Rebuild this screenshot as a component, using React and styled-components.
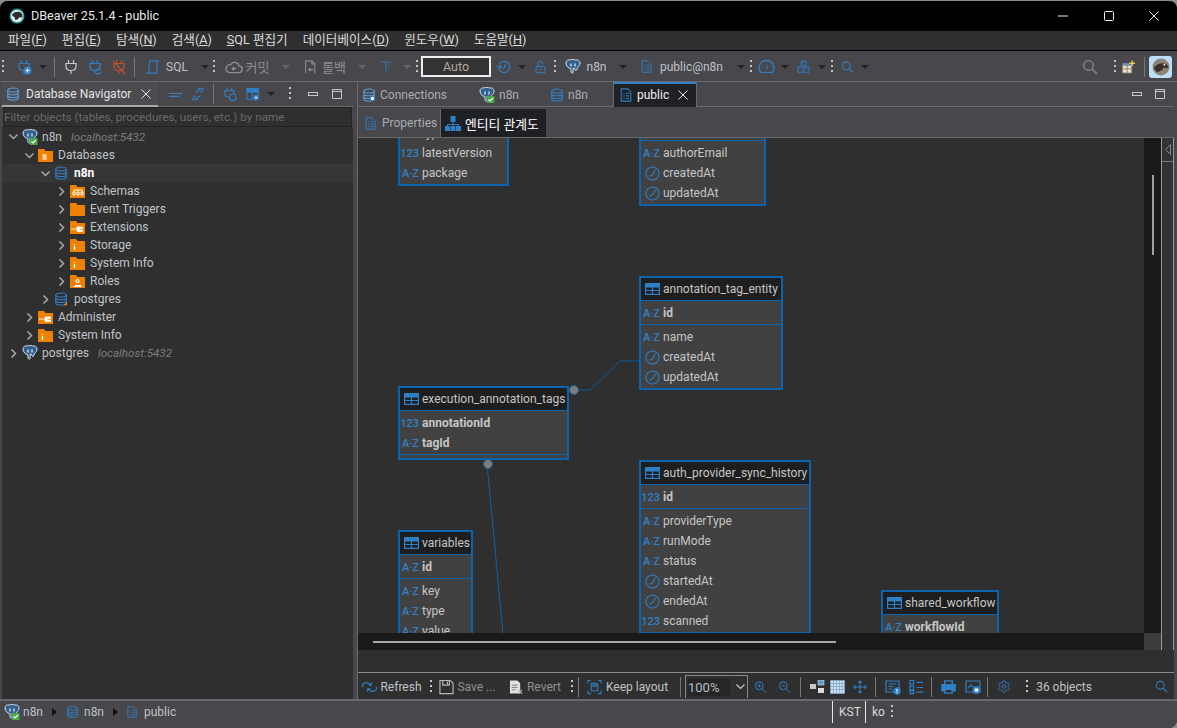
import React from 'react';
import styled, { createGlobalStyle } from 'styled-components';
import { Settings } from 'lucide-react';

const Global = createGlobalStyle`
  html, body { margin: 0; padding: 0; background: #8c8c8c; }
  body { font-family: Roboto, "Noto Sans CJK KR", sans-serif; font-size: 12px; }
  * { box-sizing: border-box; }
`;

const BLUE = '#2f80c8';
const FG = '#bfc3c7';

const Window = styled.div`
  width: 1177px;
  height: 728px;
  display: flex;
  flex-direction: column;
  overflow: hidden;
  background: #47474c;
  border-radius: 8px 8px 8px 0;
  border-top: 1px solid #8c8c8c;
`;
const TitleBar = styled.div`
  height: 30px;
  flex: none;
  background: #000;
  color: #e8e8e8;
  display: flex;
  align-items: center;
  padding: 0 0 1px 9px;
  gap: 6px;
  font-size: 12.6px;
`;
const WinButtons = styled.div`
  margin-left: auto;
  display: flex;
  height: 100%;
`;
const WinButton = styled.div`
  width: 45.5px;
  display: flex;
  align-items: center;
  justify-content: center;
`;
const MenuBar = styled.div`
  height: 20px;
  flex: none;
  background: #2f2f2f;
  border-bottom: 1px solid #000;
  display: flex;
  align-items: center;
  padding: 0 0 2px 8px;
  gap: 15px;
  color: #dcdcdc;
  font-size: 12.6px;
  line-height: 16px;
  u { text-underline-offset: 1px; }
`;
const Toolbar = styled.div`
  height: 31px;
  flex: none;
  display: flex;
  align-items: center;
  background: #47474c;
  border-bottom: 1px solid #69696d;
  padding: 1px 5px 0 0;
`;
const Tool = styled.div`
  flex: none;
  width: ${p => p.$w}px;
  margin-left: ${p => (p.$ml === 'auto' ? 'auto' : `${p.$ml || 0}px`)};
  display: flex;
  align-items: center;
  justify-content: center;
  white-space: nowrap;
  font-size: ${p => p.$fs || 12}px;
  color: ${p => (p.$dim ? '#8f8f8f' : FG)};
`;
const Caret = styled.div`
  flex: none;
  margin-left: ${p => p.$ml || 0}px;
  width: 0;
  height: 0;
  border-left: 4px solid transparent;
  border-right: 4px solid transparent;
  border-top: 4px solid ${p => (p.$dim ? '#66666a' : '#232325')};
`;
const Grip = styled.div`
  flex: none;
  margin-left: ${p => p.$ml || 0}px;
  width: 2px;
  height: 14px;
  background: repeating-linear-gradient(to bottom, #c4c4c4 0 2px, transparent 2px 5px);
`;
const Sep = styled.div`
  flex: none;
  margin-left: ${p => p.$ml || 0}px;
  width: 1px;
  height: 20px;
  background: #77777a;
`;
const AutoBox = styled.div`
  flex: none;
  margin-left: 3px;
  width: 70px;
  height: 21px;
  border: 2px solid #eee;
  background: #333;
  color: #b0a898;
  display: flex;
  align-items: center;
  justify-content: center;
  font-size: 12.5px;
`;
const PerspectiveButton = styled.div`
  flex: none;
  margin-left: 4px;
  width: 23px;
  height: 22px;
  border-radius: 3px;
  background: #bcdff7;
  display: flex;
  align-items: center;
  justify-content: center;
`;
const Main = styled.div`
  flex: 1;
  min-height: 0;
  display: flex;
  background: #47474c;
`;
const LeftPanel = styled.div`
  width: 352px;
  margin-left: 1px;
  flex: none;
  display: flex;
  flex-direction: column;
`;
const RightPanel = styled.div`
  width: 817px;
  flex: none;
  margin-left: 4px;
  display: flex;
  flex-direction: column;
  border-left: 1px solid #69696d;
`;
const TabStrip = styled.div`
  height: 25px;
  flex: none;
  display: flex;
  align-items: center;
  background: #47474c;
  border-bottom: 1px solid #69696d;
  padding-right: ${p => p.$pr || 0}px;
`;
const NavTab = styled.div`
  width: 156px;
  height: 25px;
  flex: none;
  margin-left: 1px;
  display: flex;
  align-items: center;
  gap: 6px;
  padding: 2px 0 0 4px;
  color: #e4e4e4;
  background: #4b4b50;
  border-bottom: 2px solid #a8a8a8;
`;
const CloseMark = styled.span`
  margin-left: auto;
  margin-right: ${p => p.$mr || 7}px;
  display: flex;
`;
const FilterInput = styled.div`
  height: 20px;
  flex: none;
  margin: 0 1px 0 2px;
  background: #2f2f2f;
  border: 1px solid #232323;
  color: #6a6a6a;
  display: flex;
  align-items: center;
  padding: 0 0 1px 0;
  font-size: 11.75px;
  white-space: nowrap;
`;
const Tree = styled.div`
  flex: 1;
  background: #2f2f2f;
  margin-left: 1px;
`;
const TreeRow = styled.div`
  height: ${p => (p.$first ? 19 : 18)}px;
  display: flex;
  align-items: center;
  padding-left: ${p => p.$lvl * 16 + 7}px;
  background: ${p => (p.$sel ? '#363636' : 'transparent')};
  color: ${p => (p.$sel ? '#fff' : FG)};
  font-weight: ${p => (p.$sel ? 700 : 400)};
  white-space: nowrap;
`;
const Chevron = styled.span`
  width: 9px;
  flex: none;
  display: flex;
  margin-right: 4px;
`;
const RowIcon = styled.span`
  width: 17px;
  flex: none;
  display: flex;
  margin-right: 3px;
`;
const Host = styled.span`
  margin-left: 9px;
  font-style: italic;
  font-size: 11.6px;
  color: #7d7d7d;
`;
const EditorTab = styled.div`
  flex: none;
  height: 25px;
  width: ${p => p.$w}px;
  margin-left: ${p => p.$ml || 0}px;
  display: flex;
  align-items: center;
  gap: 4px;
  padding: ${p => (p.$active ? 0 : 1)}px 0 0 ${p => p.$pl || 0}px;
  color: ${p => (p.$active ? '#f0f0f0' : '#a9adb1')};
  background: ${p => (p.$active ? '#1f2024' : 'transparent')};
  border-top: ${p => (p.$active ? `2px solid ${BLUE}` : 'none')};
  border-right: ${p => (p.$active ? '1px solid #69696d' : 'none')};
  border-left: ${p => (p.$active ? '1px solid #69696d' : 'none')};
`;
const StripIcons = styled.div`
  margin-left: auto;
  display: flex;
  align-items: center;
  gap: 13px;
`;
const SubTabs = styled.div`
  height: 30px;
  flex: none;
  margin-top: 1px;
  display: flex;
  align-items: flex-end;
  background: #47474c;
  border-bottom: 1px solid #69696d;
`;
const SubTab = styled.div`
  flex: none;
  width: ${p => p.$w}px;
  height: 28px;
  display: flex;
  align-items: center;
  gap: ${p => (p.$active ? 4 : 5)}px;
  padding-left: ${p => p.$pl}px;
  font-size: ${p => (p.$active ? 12.8 : 12)}px;
  color: ${p => (p.$active ? '#fff' : '#a9adb1')};
  background: ${p => (p.$active ? '#1f2024' : 'transparent')};
  border-right: ${p => (p.$active ? 'none' : '1px solid #69696d')};
`;
const DiagramArea = styled.div`
  height: 512px;
  flex: none;
  display: flex;
`;
const CanvasColumn = styled.div`
  width: 786px;
  flex: none;
  display: flex;
  flex-direction: column;
`;
const Canvas = styled.div`
  position: relative;
  flex: 1;
  overflow: hidden;
  background: #2f2f2f;
`;
const Wires = styled.svg`
  position: absolute;
  inset: 0;
`;
const Node = styled.div`
  position: absolute;
  left: ${p => p.$x}px;
  top: ${p => p.$y}px;
  width: ${p => p.$w}px;
  border: 2px solid #0b64ad;
  background: #414141;
  color: #c6c6c6;
`;
const NodeHead = styled.div`
  height: 23px;
  display: flex;
  align-items: center;
  padding-left: 4px;
  gap: 3px;
  background: #1e1e1e;
  border-bottom: 1px solid #0b64ad;
  white-space: nowrap;
`;
const NodeSection = styled.div`
  padding: 2px 0 1px;
  min-height: 3px;
  border-top: ${p => (p.$line ? '1px solid #0b64ad' : 'none')};
`;
const Attr = styled.div`
  height: 20px;
  display: flex;
  align-items: center;
  font-weight: ${p => (p.$key ? 700 : 400)};
  white-space: nowrap;
`;
const AttrIcon = styled.span`
  width: 22px;
  padding-right: 3px;
  flex: none;
  display: flex;
  justify-content: flex-end;
  color: ${BLUE};
  font-size: 11px;
  font-weight: 500;
`;
const TrackColumn = styled.div`
  width: 17px;
  flex: none;
  display: flex;
  flex-direction: column;
  background: #1a1a1a;
`;
const VTrack = styled.div`
  flex: 1;
  display: flex;
  justify-content: center;
  padding-top: 37px;
`;
const VThumb = styled.div`
  width: 2px;
  height: 80px;
  background: #a0a0a0;
`;
const ScrollCorner = styled.div`
  height: 17px;
  flex: none;
  background: #3c3c3c;
`;
const SideHandle = styled.div`
  width: 13px;
  flex: none;
  background: #333;
  border-left: 1px solid #999;
  border-right: 1px solid #999;
`;
const HandleCap = styled.div`
  height: 24px;
  border-bottom: 1px solid #777;
  display: flex;
  align-items: center;
  justify-content: center;
`;
const HScroll = styled.div`
  height: 17px;
  flex: none;
  background: #1a1a1a;
  display: flex;
  align-items: center;
  padding-left: 15px;
`;
const HThumb = styled.div`
  width: 463px;
  height: 2px;
  background: #a8a8a8;
`;
const BlankBand = styled.div`
  flex: 1;
  background: #2f2f2f;
`;
const DiagramBar = styled.div`
  height: 27px;
  flex: none;
  display: flex;
  align-items: center;
  background: #2f2f2f;
  border-top: 1px solid #8a8a8a;
  padding: 1px 6px 0 0;
`;
const ZoomCombo = styled.div`
  flex: none;
  margin-left: 4px;
  width: 63px;
  height: 23px;
  display: flex;
  align-items: center;
  border: 1px solid #8a8a8a;
  border-bottom: none;
  color: #b6bcc2;
  font-size: 13px;
`;
const ZoomValue = styled.div`
  width: 42px;
  height: 17px;
  margin-left: 2px;
  background: #262626;
  display: flex;
  align-items: center;
`;
const StatusBar = styled.div`
  height: 29px;
  flex: none;
  display: flex;
  align-items: center;
  background: #47474c;
  border-top: 2px solid #69696d;
  padding-bottom: 6px;
  color: ${FG};
`;
const StatusCrumb = styled.span`
  flex: none;
  width: ${p => p.$w}px;
  margin-left: ${p => p.$ml || 0}px;
  display: flex;
`;
const StatusArrow = styled.span`
  flex: none;
  margin-left: ${p => p.$ml}px;
  width: 0;
  height: 0;
  border-top: 4px solid transparent;
  border-bottom: 4px solid transparent;
  border-left: 5px solid #111;
`;
const StatusCell = styled.div`
  flex: none;
  width: ${p => p.$w}px;
  margin-left: ${p => p.$ml || 0}px;
  height: 22px;
  border-left: 1px solid #e4e4e4;
  display: flex;
  align-items: center;
  padding-left: 6px;
  color: #d8d8d8;
`;

const Ic = ({ s = 16, c = BLUE, w = 1.2, vb = 16, children }) => (
  <svg width={s} height={s} viewBox={`0 0 ${vb} ${vb}`} fill="none" stroke={c} strokeWidth={w}>{children}</svg>
);

const Db = ({ c = BLUE, s = 14, badge }) => (
  <Ic s={s} c={c}>
    <ellipse cx="8" cy="3.5" rx="6" ry="2.3" />
    <path d="M2 3.5v9c0 1.3 2.7 2.3 6 2.3s6-1 6-2.3v-9M2 6.6c0 1.3 2.7 2.3 6 2.3s6-1 6-2.3M2 9.6c0 1.3 2.7 2.3 6 2.3s6-1 6-2.3" />
    {badge === 'plug' && <circle cx="12" cy="12" r="2.500" fill="#fff" stroke={BLUE} />}
    {badge === 'arrow' && <path d="M11 15h4v-4z" fill="#f08000" stroke="none" />}
  </Ic>
);
const DocList = ({ s = 14, c = BLUE }) => (
  <Ic s={s} c={c}>
    <path d="M2.5 1h7.5l3.5 3.5V15h-11zM5 6h1.5M8 6h3.5M5 9h1.5M8 9h3.5M5 12h1.5M8 12h3.5" />
  </Ic>
);
const Elephant = ({ s = 16, ok }) => (
  <svg width={s} height={s} viewBox="0 0 16 16">
    <path d="M1 4c0-2.500 2-3.500 4-3 1.500-.8 4-.8 5.500 0 2.500-.5 4.500.7 4.500 3 0 2-1 3.500-2.500 4.200-.3 1.500-.5 3-1.500 3.300-1 .2-1.200-1-1.200-2.300-.8.3-1.300.3-1.800.1l.2 4c.1 1-1.700 1-2 .1-.4-1-.2-2.400-.4-3.900C3.500 9.500 1 7 1 4z" fill="#31618f" stroke="#d5dde5" strokeWidth="1" />
    <path d="M6 4.500v3M10 4.500v3" stroke="#e8eef4" strokeWidth="1.200" />
    {ok && <rect x="8" y="9" width="7.500" height="7" fill="#45a845" />}
    {ok && <path d="M9.500 12.500l1.500 1.500 3-3" stroke="#fff" strokeWidth="1.200" fill="none" />}
  </svg>
);
const Folder = ({ kind }) => (
  <svg width="15" height="14" viewBox="0 0 15 14">
    <path d="M0 1h6l1.500 2H15v11H0z" fill="#f08000" />
    {kind === 'db' && <path d="M4 6h5v6H4zM4 8h5M4 10h5" fill="#fff" stroke="#f08000" strokeWidth=".8" />}
    {kind === 'schema' && <path d="M3 8h2v3H3zM7 8h2v3H7zM11 8h2v3h-2zM4 8V6h8v2" fill="none" stroke="#fff" strokeWidth="1" />}
    {kind === 'wrench' && <path d="M1 9h6M7 7h5.500v1.500H9v1.500h3.500v1.500H7z" fill="#fff" stroke="#fff" strokeWidth=".8" />}
    {kind === 'info' && <path d="M4.500 6v1M4.500 8v4" stroke="#fff" strokeWidth="1.400" />}
    {kind === 'user' && <path d="M5 11.500h6M3.500 12.500h8M7.500 5.500a1.500 1.500 0 1 0 .01 0z" stroke="#fff" strokeWidth="1.100" fill="none" />}
  </svg>
);
const Chev = ({ open }) => (
  <svg width="9" height="9" viewBox="0 0 9 9" fill="none" stroke="#a8a8a8" strokeWidth="1.500">
    {open ? <path d="M.5 2.500l4 4 4-4" /> : <path d="M2.500.5l4 4-4 4" />}
  </svg>
);
const Plug = ({ c = BLUE, children }) => (
  <Ic c={c}>
    <path d="M5.500 1v3.500M10.500 1v3.500M3 4.500h10v3c0 2.500-2 4-5 4s-5-1.500-5-4zM8 11.500V15" />
    {children}
  </Ic>
);
const Beaver = ({ s = 16 }) => (
  <svg width={s} height={s} viewBox="0 0 16 16">
    <circle cx="8" cy="8" r="7.500" fill="#2aa0a5" />
    <circle cx="8" cy="8" r="6" fill="#f2f2f2" />
    <path d="M3 7c1-3 5-4 8-3 2 1 2.500 3 2.500 5-1 1-2 .5-3 0-1 2-2 3-4 3-1-1-.5-2-1-3-1 0-2-1-2.500-2z" fill="#2c2c2c" />
  </svg>
);
const Mole = () => (
  <svg width="18" height="18" viewBox="0 0 16 16">
    <circle cx="8" cy="8" r="7.500" fill="#8f8378" />
    <path d="M1.500 9c2-3 6-5 10-4 2 .5 3 2 3 3.500-2 1-3 .5-4 0-1 2-3 4-6 4-1-1-2-2-3-3.500z" fill="#3a2f2a" />
    <circle cx="11" cy="6" r=".8" fill="#fff" />
  </svg>
);
const Cross = ({ s = 10, c = '#e8e8e8' }) => (
  <svg width={s} height={s} viewBox="0 0 10 10" stroke={c} strokeWidth="1" fill="none">
    <path d="M.5.5l9 9M9.500.5l-9 9" />
  </svg>
);
const MinIcon = () => (
  <svg width="10" height="5" viewBox="0 0 10 5" fill="none" stroke="#c8c8c8"><rect x=".5" y=".5" width="9" height="3" /></svg>
);
const MaxIcon = () => (
  <svg width="10" height="10" viewBox="0 0 10 10" fill="none" stroke="#c8c8c8"><path d="M.5.5h9v9h-9zM.5 2.500h9" /></svg>
);
const TableIcon = () => (
  <svg width="15" height="12" viewBox="0 0 15 12" fill="none" stroke="#2f80c8" strokeWidth="1.200">
    <path d="M.6.6h13.800v10.800H.6z" />
    <path d="M.6 1.500h13.800v2.500H.6z" fill="#2f80c8" />
    <path d="M.6 7.500h13.800M7.500 3v8" />
  </svg>
);
const ClockIcon = () => (
  <Ic s={15} w={1.150}>
    <circle cx="8" cy="8" r="7" />
    <path d="M11 3.800L8.500 9 5 11" />
  </Ic>
);
const Search = ({ c = BLUE, s = 14, w = 1.300 }) => (
  <Ic c={c} s={s} w={w}>
    <circle cx="6.500" cy="6.500" r="4.800" />
    <path d="M10 10l5 5" />
  </Ic>
);

const typeIcons = {
  s: 'A·Z',
  n: '123',
  t: <ClockIcon />,
};
const nodes = [
  { name: 'installed_packages', x: 40, y: -66, w: 111, keys: [['s', 'packageName']], attrs: [['s', 'type'], ['n', 'latestVersion'], ['s', 'package']] },
  { name: 'installed_nodes', x: 281, y: -46, w: 127, keys: [['s', 'name']], attrs: [['s', 'authorEmail'], ['t', 'createdAt'], ['t', 'updatedAt']] },
  { name: 'annotation_tag_entity', x: 281, y: 138, w: 144, keys: [['s', 'id']], attrs: [['s', 'name'], ['t', 'createdAt'], ['t', 'updatedAt']] },
  { name: 'execution_annotation_tags', x: 40, y: 248, w: 171, keys: [['n', 'annotationId'], ['s', 'tagId']], attrs: [] },
  { name: 'variables', x: 40, y: 392, w: 75, keys: [['s', 'id']], attrs: [['s', 'key'], ['s', 'type'], ['s', 'value']] },
  { name: 'auth_provider_sync_history', x: 281, y: 322, w: 172, keys: [['n', 'id']], attrs: [['s', 'providerType'], ['s', 'runMode'], ['s', 'status'], ['t', 'startedAt'], ['t', 'endedAt'], ['n', 'scanned']] },
  { name: 'shared_workflow', x: 523, y: 452, w: 118, keys: [['s', 'workflowId']], attrs: [] },
];
const tree = [
  { lvl: 0, open: true, icon: <Elephant ok />, text: 'n8n', host: 'localhost:5432', first: true },
  { lvl: 1, open: true, icon: <Folder kind="db" />, text: 'Databases' },
  { lvl: 2, open: true, icon: <Db />, text: 'n8n', sel: true },
  { lvl: 3, icon: <Folder kind="schema" />, text: 'Schemas' },
  { lvl: 3, icon: <Folder />, text: 'Event Triggers' },
  { lvl: 3, icon: <Folder kind="wrench" />, text: 'Extensions' },
  { lvl: 3, icon: <Folder kind="info" />, text: 'Storage' },
  { lvl: 3, icon: <Folder kind="info" />, text: 'System Info' },
  { lvl: 3, icon: <Folder kind="user" />, text: 'Roles' },
  { lvl: 2, icon: <Db badge="arrow" />, text: 'postgres' },
  { lvl: 1, icon: <Folder kind="wrench" />, text: 'Administer' },
  { lvl: 1, icon: <Folder kind="info" />, text: 'System Info' },
  { lvl: 0, icon: <Elephant />, text: 'postgres', host: 'localhost:5432' },
];

function MainToolbar() {
  return (
    <Toolbar>
      <Grip $ml={2} />
      <Tool $w={16} $ml={12}>
        <Plug><circle cx="11.500" cy="11.500" r="4" fill={BLUE} stroke="none" /><path d="M11.500 9.500v4M9.500 11.500h4" stroke="#fff" /></Plug>
      </Tool>
      <Caret $ml={7} />
      <Sep $ml={7} />
      <Tool $w={16} $ml={8}><Plug c="#c9c9c9" /></Tool>
      <Tool $w={16} $ml={8}><Plug><path d="M9 12a3 3 0 0 1 5-1M14 13a3 3 0 0 1-5 1" /></Plug></Tool>
      <Tool $w={16} $ml={8}><Plug c="#c0502f"><path d="M2 2l12 13" /></Plug></Tool>
      <Sep $ml={7} />
      <Tool $w={14} $ml={11}><Ic s={16}><path d="M4 1h10l-1.500 1.500V15H1.500c1.500-1 2-2 2-3z" /></Ic></Tool>
      <Tool $w={22} $ml={6}>SQL</Tool>
      <Caret $ml={13} />
      <Grip $ml={4} />
      <Tool $w={18} $ml={10}>
        <Ic s={18} c="#8f8f8f"><path d="M4 13h8a3 3 0 0 0 .500-6 4 4 0 0 0-7.500-1 3.500 3.500 0 0 0-1 7zM10 9.500H6.500M8 8L6.500 9.500 8 11" /></Ic>
      </Tool>
      <Tool $w={25} $ml={2} $dim $fs={13}>커밋</Tool>
      <Caret $ml={12} $dim />
      <Tool $w={14} $ml={13}>
        <Ic c="#8f8f8f"><path d="M3 15V1h7l3.500 3.500V15M10 1v3.500h3.500M12 11H7M8.500 9L6.500 11l2 2" /></Ic>
      </Tool>
      <Tool $w={24} $ml={5} $dim $fs={13}>롤백</Tool>
      <Caret $ml={12} $dim />
      <Tool $w={12} $ml={14}><Ic s={13}><path d="M1 2h14M8 2v13" /><path d="M11 5h3M11 8h2M11 11h2" strokeDasharray="1 1" /></Ic></Tool>
      <Caret $ml={11} $dim />
      <Grip $ml={5} />
      <AutoBox>Auto</AutoBox>
      <Tool $w={15} $ml={5}>
        <Ic><path d="M3.500 5a6 6 0 1 1-.5 5M0 8h6M3 6l3 2-3 2M9.500 4.500V8l-2 2" /></Ic>
      </Tool>
      <Caret $ml={7} />
      <Tool $w={13} $ml={8}>
        <Ic><path d="M2.500 7.500h11V15h-11zM5 7.500V4a3 3 0 0 1 6 0M8 10v2.500" /></Ic>
      </Tool>
      <Grip $ml={7} />
      <Tool $w={16} $ml={9}><Elephant /></Tool>
      <Tool $w={21} $ml={5}>n8n</Tool>
      <Caret $ml={12} />
      <Tool $w={13} $ml={13}><DocList s={15} /></Tool>
      <Tool $w={67} $ml={5}>public@n8n</Tool>
      <Caret $ml={12} />
      <Grip $ml={5} />
      <Tool $w={17} $ml={6}>
        <Ic s={17}><path d="M2.500 13.500a7 7 0 1 1 11 0zM8 11l1-4M3 8.500h1M12 8.500h1M8 3.500v1" /></Ic>
      </Tool>
      <Caret $ml={6} />
      <Tool $w={13} $ml={8}>
        <Ic s={14}><path d="M5 1h6v5H5zM1 8h6.500v6.500H1zM8.500 8H15v6.500H8.500zM7 1v2M3.500 8v2M11.500 8v2" /></Ic>
      </Tool>
      <Caret $ml={8} />
      <Grip $ml={5} />
      <Tool $w={13} $ml={8}><Search /></Tool>
      <Caret $ml={7} />
      <Tool $w={16} $ml="auto"><Search c="#7a7a7a" s={16} w={1.800} /></Tool>
      <Grip $ml={16} />
      <Tool $w={13} $ml={6}>
        <svg width="14" height="14" viewBox="0 0 14 14">
          <path d="M.5 3h9.500v2H.5z" fill="#5b9bd5" />
          <path d="M.5 5h10v8.500H.5zM.5 9h10M5.500 5v8.500" fill="#e8e2d0" stroke="#8a8470" />
          <path d="M11 0v6M8 3h6" stroke="#f2c94c" strokeWidth="1.500" />
        </svg>
      </Tool>
      <Sep $ml={9} />
      <PerspectiveButton><Mole /></PerspectiveButton>
    </Toolbar>
  );
}

function Navigator() {
  return (
    <LeftPanel>
      <TabStrip>
        <NavTab>
          <Db c="#5f9fd8" />
          Database Navigator
          <CloseMark><Cross /></CloseMark>
        </NavTab>
        <Tool $w={15} $ml={10}><Ic><path d="M1 7.500h13M1 10.500h11" /><path d="M14 6v3" /></Ic></Tool>
        <Tool $w={14} $ml={8}><Ic s={14}><path d="M5 6L10 3l-1-1.500 5 .5-2 4-1-1.500M11 10l-5 3 1 1.500-5-.5 2-4 1 1.500" /></Ic></Tool>
        <Sep $ml={8} />
        <Tool $w={15} $ml={8}><Plug><circle cx="11.500" cy="11.500" r="3.500" fill="#47474c" /></Plug></Tool>
        <Tool $w={14} $ml={9}>
          <Ic s={15}><path d="M1 1.500h13v12H1zM1 5h13M7 5v8.500" /><path d="M1 1.500h13V5H1z" fill={BLUE} /><circle cx="11.500" cy="11.500" r="3.500" fill={BLUE} stroke="none" /><path d="M9.800 10.500h3.400L11.500 13z" fill="#fff" stroke="none" /></Ic>
        </Tool>
        <Caret $ml={7} />
        <Tool $w={3} $ml={13}>
          <Grip />
        </Tool>
        <Tool $w={10} $ml={17}><MinIcon /></Tool>
        <Tool $w={10} $ml={14}><MaxIcon /></Tool>
      </TabStrip>
      <FilterInput>Filter objects (tables, procedures, users, etc.) by name</FilterInput>
      <Tree>
        {tree.map((r, i) => (
          <TreeRow key={i} $lvl={r.lvl} $sel={r.sel} $first={r.first}>
            <Chevron><Chev open={r.open} /></Chevron>
            <RowIcon>{r.icon}</RowIcon>
            {r.text}
            {r.host && <Host>{r.host}</Host>}
          </TreeRow>
        ))}
      </Tree>
    </LeftPanel>
  );
}

function Diagram() {
  return (
    <DiagramArea>
      <CanvasColumn>
        <Canvas>
          <Wires width="786" height="495">
            <path d="M216 252h16l30-29h20" fill="none" stroke="#0b5a9c" />
            <path d="M129 326l16 170" fill="none" stroke="#0b64ad" />
            <circle cx="216" cy="252" r="4.500" fill="#7d7d7d" stroke="#1c5f96" />
            <circle cx="130" cy="326" r="4.500" fill="#7d7d7d" stroke="#1c5f96" />
          </Wires>
          {nodes.map(n => (
            <Node key={n.name} $x={n.x} $y={n.y} $w={n.w}>
              <NodeHead><TableIcon />{n.name}</NodeHead>
              <NodeSection>
                {n.keys.map(([t, label]) => (
                  <Attr key={label} $key><AttrIcon>{typeIcons[t]}</AttrIcon>{label}</Attr>
                ))}
              </NodeSection>
              <NodeSection $line>
                {n.attrs.map(([t, label]) => (
                  <Attr key={label}><AttrIcon>{typeIcons[t]}</AttrIcon>{label}</Attr>
                ))}
              </NodeSection>
            </Node>
          ))}
        </Canvas>
        <HScroll><HThumb /></HScroll>
      </CanvasColumn>
      <TrackColumn>
        <VTrack><VThumb /></VTrack>
        <ScrollCorner />
      </TrackColumn>
      <SideHandle>
        <HandleCap>
          <svg width="6" height="11" viewBox="0 0 6 11" fill="none" stroke="#8a8a8a"><path d="M5.500.5v10L.5 5.500z" /></svg>
        </HandleCap>
      </SideHandle>
    </DiagramArea>
  );
}

function DiagramTools() {
  return (
    <DiagramBar>
      <Tool $w={15} $ml={4}><Ic><path d="M1 8a4 3 0 0 1 7-3l2 1M15 8a4 3 0 0 1-7 3l-2-1M10 3v3H7M6 13v-3h3" /></Ic></Tool>
      <Tool $w={40} $ml={4}>Refresh</Tool>
      <Grip $ml={9} />
      <Tool $w={15} $ml={7}><Ic c="#b8b8b8"><path d="M1 1h11l3 3v11H1zM4 1v5h7V1M9 2v3" /></Ic></Tool>
      <Tool $w={37} $ml={4} $dim>Save ...</Tool>
      <Tool $w={14} $ml={14}>
        <svg width="15" height="16" viewBox="0 0 15 16">
          <path d="M1 1h8l3 3v11H1z" fill="#e0e0e0" />
          <path d="M3 6h6M3 8.500h6M3 11h4" stroke="#777" />
          <path d="M10 11l4 4M14 11l-4 4" stroke="#bbb" strokeWidth="1.200" />
        </svg>
      </Tool>
      <Tool $w={34} $ml={4} $dim>Revert</Tool>
      <Grip $ml={10} />
      <Sep $ml={5} />
      <Tool $w={15} $ml={8}><Ic><path d="M1 4V1h3M12 1h3v3M15 12v3h-3M4 15H1v-3M4.500 12V4h5.500l1.500 1.500V12zM6.500 4v3h3V4" /></Ic></Tool>
      <Tool $w={62} $ml={4}>Keep layout</Tool>
      <Sep $ml={12} />
      <ZoomCombo>
        <ZoomValue>100%</ZoomValue>
        <Tool $w={12} $ml={4}>
          <svg width="9" height="6" viewBox="0 0 9 6" fill="none" stroke="#c8c8c8" strokeWidth="1.200"><path d="M.5.5l4 4 4-4" /></svg>
        </Tool>
      </ZoomCombo>
      <Tool $w={13} $ml={6}><Ic s={14}><circle cx="6.500" cy="6.500" r="4.800" /><path d="M10 10l5 5M4.500 6.500h4M6.500 4.500v4" /></Ic></Tool>
      <Tool $w={13} $ml={11}><Ic s={14}><circle cx="6.500" cy="6.500" r="4.800" /><path d="M10 10l5 5M4.500 6.500h4" /></Ic></Tool>
      <Sep $ml={9} />
      <Tool $w={15} $ml={9}>
        <svg width="15" height="14" viewBox="0 0 15 14">
          <rect x="0" y="4" width="6" height="5" fill="#c8c8c8" />
          <rect x="8" y="0" width="6" height="5" fill="#5a9bd5" stroke="#ddd" strokeWidth=".6" />
          <rect x="8" y="8" width="6" height="5" fill="#ddd" />
        </svg>
      </Tool>
      <Tool $w={15} $ml={5}>
        <svg width="15" height="14" viewBox="0 0 15 14" fill="#cfe0ef" stroke="#7fa8cc" strokeWidth=".8">
          <path d="M.5.5h14v13H.5z" /><path d="M3.500.5v13M6.500.5v13M9.500.5v13M12 .5v13M.5 3.500h14M.5 6.500h14M.5 9.500h14" fill="none" />
        </svg>
      </Tool>
      <Tool $w={14} $ml={8}><Ic s={14}><path d="M8 1v14M1 8h14M6 3l2-2 2 2M6 13l2 2 2-2M3 6L1 8l2 2M13 6l2 2-2 2" /></Ic></Tool>
      <Sep $ml={8} />
      <Tool $w={16} $ml={9}>
        <Ic><path d="M1 2h13v11H1zM3.500 5h8M3.500 7.500h5M3.500 10h4" /><circle cx="12" cy="12" r="3.800" fill={BLUE} stroke="none" /><path d="M12 10v2.500M12 13.500v1" stroke="#fff" /></Ic>
      </Tool>
      <Tool $w={15} $ml={8}><Ic><path d="M1 1h4v4H1zM1 7h4v4H1zM1 12h4v3H1zM8 3h7M8 8.500h7M8 13.500h7" /></Ic></Tool>
      <Sep $ml={7} />
      <Tool $w={15} $ml={9}>
        <Ic c={BLUE} w={1.500}><path d="M4 5V1.500h8V5" /><path d="M1 5.500h14V12h-3v-2H4v2H1z" fill={BLUE} /><path d="M4 10.500h8v4H4z" /></Ic>
      </Tool>
      <Tool $w={16} $ml={9}>
        <Ic><path d="M1 2h14v11H1z" /><path d="M3 9l3-3 2 2" /><circle cx="11.500" cy="11" r="4" fill={BLUE} stroke="none" /><rect x="9.800" y="9.500" width="3.400" height="3" fill="#fff" stroke="none" /></Ic>
      </Tool>
      <Sep $ml={6} />
      <Tool $w={14} $ml={9}><Settings size={15} color={BLUE} strokeWidth={1.500} /></Tool>
      <Grip $ml={15} />
      <Tool $w={56} $ml={8}>36 objects</Tool>
      <Tool $w={13} $ml="auto"><Search s={13} /></Tool>
    </DiagramBar>
  );
}

export default function App() {
  return (
    <>
      <Global />
      <Window>
        <TitleBar>
          <Beaver />
          DBeaver 25.1.4 - public
          <WinButtons>
            <WinButton><svg width="10" height="2" viewBox="0 0 10 2" stroke="#eee"><path d="M0 1h10" /></svg></WinButton>
            <WinButton><svg width="10" height="10" viewBox="0 0 10 10" stroke="#eee" fill="none"><rect x=".5" y=".5" width="9" height="9" rx="1" /></svg></WinButton>
            <WinButton><Cross /></WinButton>
          </WinButtons>
        </TitleBar>
        <MenuBar>
          <span>파일(<u>F</u>)</span>
          <span>편집(<u>E</u>)</span>
          <span>탐색(<u>N</u>)</span>
          <span>검색(<u>A</u>)</span>
          <span><u>S</u>QL 편집기</span>
          <span>데이터베이스(<u>D</u>)</span>
          <span>윈도우(<u>W</u>)</span>
          <span>도움말(<u>H</u>)</span>
        </MenuBar>
        <MainToolbar />
        <Main>
          <Navigator />
          <RightPanel>
            <TabStrip $pr={9}>
              <EditorTab $w={100} $ml={4}>
                <Db c="#5f9fd8" badge="plug" />Connections
              </EditorTab>
              <EditorTab $w={50} $ml={17}><Elephant ok />n8n</EditorTab>
              <EditorTab $w={50} $ml={21}><Db />n8n</EditorTab>
              <EditorTab $w={84} $ml={13} $pl={5} $active>
                <DocList />public
                <CloseMark $mr={8}><Cross /></CloseMark>
              </EditorTab>
              <StripIcons><MinIcon /><MaxIcon /></StripIcons>
            </TabStrip>
            <SubTabs>
              <SubTab $w={83} $pl={6}>
                <DocList s={13} />Properties
              </SubTab>
              <SubTab $w={105} $pl={4} $active>
                <svg width="16" height="15" viewBox="0 0 16 15" fill={BLUE} stroke={BLUE}>
                  <rect x="6" y="0.500" width="4" height="5" />
                  <path d="M8 5.500v3M2.500 8.500h11v2M2.500 8.500v2M8 8.500v2" fill="none" />
                  <rect x="0.500" y="10.500" width="4" height="4" />
                  <rect x="6" y="10.500" width="4" height="4" />
                  <rect x="11.500" y="10.500" width="4" height="4" />
                </svg>
                엔티티 관계도
              </SubTab>
            </SubTabs>
            <Diagram />
            <BlankBand />
            <DiagramTools />
          </RightPanel>
        </Main>
        <StatusBar>
          <StatusCrumb $w={16} $ml={4}><Elephant ok /></StatusCrumb>
          <StatusCrumb $w={21} $ml={3}>n8n</StatusCrumb>
          <StatusArrow $ml={8} />
          <StatusCrumb $w={13} $ml={9}><Db /></StatusCrumb>
          <StatusCrumb $w={21} $ml={5}>n8n</StatusCrumb>
          <StatusArrow $ml={8} />
          <StatusCrumb $w={12} $ml={8}><DocList /></StatusCrumb>
          <StatusCrumb $w={33} $ml={6}>public</StatusCrumb>
          <StatusCell $w={33} $ml={655}>KST</StatusCell>
          <StatusCell $w={26}>ko</StatusCell>
          <Grip />
        </StatusBar>
      </Window>
    </>
  );
}
